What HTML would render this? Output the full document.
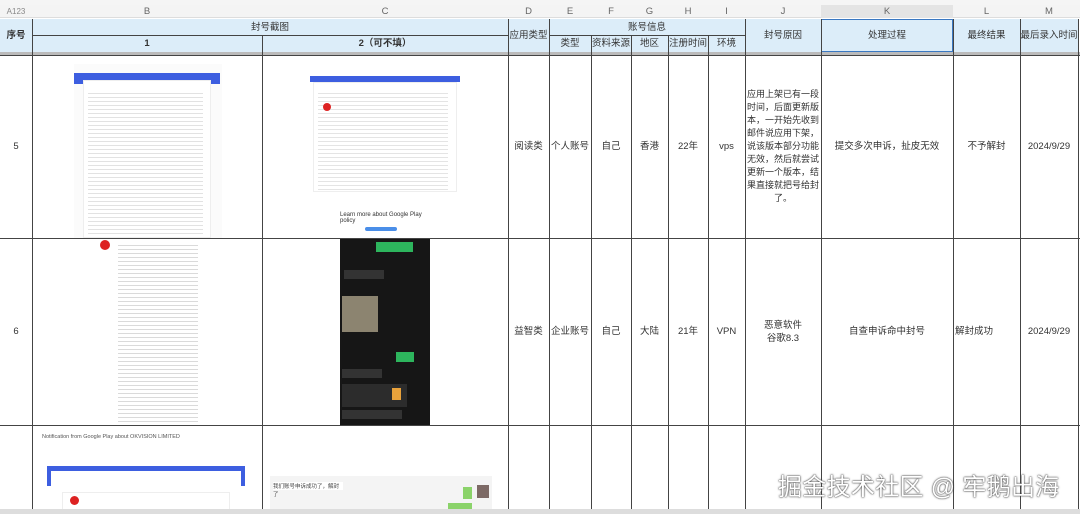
<!DOCTYPE html>
<html><head><meta charset="utf-8"><style>
*{margin:0;padding:0;box-sizing:border-box}
body{width:1080px;height:514px;overflow:hidden;background:#fff;font-family:"Liberation Sans","Noto Sans CJK SC",sans-serif;font-size:9.5px;color:#333;position:relative}
.a{position:absolute}
.c{position:absolute;display:flex;align-items:center;justify-content:center;text-align:center;line-height:13px}
.vl{position:absolute;width:1px;background:#444}
.hl{position:absolute;height:1px;background:#444}
</style></head><body>
<div class="a" style="left:0;top:0;width:1080px;height:5px;background:#f5f5f5"></div>
<div class="a" style="left:0;top:5px;width:1080px;height:13px;background:#f4f4f4;border-bottom:1px solid #ddd"></div>
<div class="a" style="left:821px;top:5px;width:132px;height:13px;background:#e4e4e4"></div>
<div class="c" style="left:0;top:5px;width:32px;height:13px;color:#888;font-size:8px">A123</div>
<div class="c" style="left:32px;top:5px;width:230px;height:13px;color:#666">B</div>
<div class="c" style="left:262px;top:5px;width:246px;height:13px;color:#666">C</div>
<div class="c" style="left:508px;top:5px;width:41px;height:13px;color:#666">D</div>
<div class="c" style="left:549px;top:5px;width:42px;height:13px;color:#666">E</div>
<div class="c" style="left:591px;top:5px;width:40px;height:13px;color:#666">F</div>
<div class="c" style="left:631px;top:5px;width:37px;height:13px;color:#666">G</div>
<div class="c" style="left:668px;top:5px;width:40px;height:13px;color:#666">H</div>
<div class="c" style="left:708px;top:5px;width:37px;height:13px;color:#666">I</div>
<div class="c" style="left:745px;top:5px;width:76px;height:13px;color:#666">J</div>
<div class="c" style="left:821px;top:5px;width:132px;height:13px;color:#666">K</div>
<div class="c" style="left:953px;top:5px;width:67px;height:13px;color:#666">L</div>
<div class="c" style="left:1020px;top:5px;width:58px;height:13px;color:#666">M</div>
<div class="a" style="left:0;top:19px;width:1078px;height:33px;background:#dcedf9"></div>
<div class="a" style="left:821px;top:19px;width:132px;height:33px;border:1.5px solid #3a78c2"></div>
<div class="a" style="left:0;top:52px;width:1080px;height:3px;background:#bbb"></div>
<div class="c" style="left:0;top:19px;width:32px;height:33px;font-weight:bold">序号</div>
<div class="c" style="left:32px;top:19px;width:476px;height:16px">封号截图</div>
<div class="c" style="left:32px;top:35px;width:230px;height:17px;font-weight:bold">1</div>
<div class="c" style="left:262px;top:35px;width:246px;height:17px;font-weight:bold">2（可不填）</div>
<div class="c" style="left:508px;top:19px;width:41px;height:33px">应用类型</div>
<div class="c" style="left:549px;top:19px;width:196px;height:16px">账号信息</div>
<div class="c" style="left:549px;top:35px;width:42px;height:17px">类型</div>
<div class="c" style="left:591px;top:35px;width:40px;height:17px">资料来源</div>
<div class="c" style="left:631px;top:35px;width:37px;height:17px">地区</div>
<div class="c" style="left:668px;top:35px;width:40px;height:17px">注册时间</div>
<div class="c" style="left:708px;top:35px;width:37px;height:17px">环境</div>
<div class="c" style="left:745px;top:19px;width:76px;height:33px">封号原因</div>
<div class="c" style="left:821px;top:19px;width:132px;height:33px">处理过程</div>
<div class="c" style="left:953px;top:19px;width:67px;height:33px">最终结果</div>
<div class="c" style="left:1020px;top:19px;width:58px;height:33px">最后录入时间</div>
<div class="hl" style="left:32px;top:35px;width:476px"></div>
<div class="hl" style="left:549px;top:35px;width:196px"></div>
<div class="vl" style="left:32px;top:19px;height:495px"></div>
<div class="vl" style="left:262px;top:35px;height:479px"></div>
<div class="vl" style="left:508px;top:19px;height:495px"></div>
<div class="vl" style="left:549px;top:19px;height:495px"></div>
<div class="vl" style="left:591px;top:35px;height:479px"></div>
<div class="vl" style="left:631px;top:35px;height:479px"></div>
<div class="vl" style="left:668px;top:35px;height:479px"></div>
<div class="vl" style="left:708px;top:35px;height:479px"></div>
<div class="vl" style="left:745px;top:19px;height:495px"></div>
<div class="vl" style="left:821px;top:19px;height:495px"></div>
<div class="vl" style="left:953px;top:19px;height:495px"></div>
<div class="vl" style="left:1020px;top:19px;height:495px"></div>
<div class="vl" style="left:1078px;top:19px;height:495px"></div>
<div class="hl" style="left:0;top:55px;width:1080px"></div>
<div class="hl" style="left:0;top:238px;width:1080px"></div>
<div class="hl" style="left:0;top:425px;width:1080px"></div>
<div class="a" style="left:74px;top:64px;width:148px;height:174px;background:#fbfbfb"></div>
<div class="a" style="left:74px;top:73px;width:146px;height:11px;background:#3d5ee0"></div>
<div class="a" style="left:83px;top:80px;width:128px;height:158px;background:#fff;border:1px solid #eee"></div>
<div class="a" style="left:88px;top:90px;width:115px;height:145px;background:repeating-linear-gradient(#fff 0 3px,#e2e2e2 3px 4px)"></div>
<div class="a" style="left:310px;top:76px;width:150px;height:6px;background:#3d5ee0"></div>
<div class="a" style="left:313px;top:82px;width:144px;height:110px;background:#fff;border:1px solid #eee"></div>
<div class="a" style="left:318px;top:90px;width:130px;height:100px;background:repeating-linear-gradient(#fff 0 3px,#e4e4e4 3px 4px)"></div>
<div class="a" style="left:323px;top:103px;width:8px;height:8px;border-radius:50%;background:#d22"></div>
<div class="a" style="left:340px;top:212px;width:90px;height:10px;color:#333;font-size:6px">Learn more about Google Play policy</div>
<div class="a" style="left:365px;top:227px;width:32px;height:4px;background:#4a8ee8;border-radius:2px"></div>
<div class="a" style="left:100px;top:240px;width:10px;height:10px;border-radius:50%;background:#d22"></div>
<div class="a" style="left:118px;top:242px;width:80px;height:180px;background:repeating-linear-gradient(#fff 0 3px,#dadada 3px 4px)"></div>
<div class="a" style="left:340px;top:239px;width:90px;height:186px;background:#161616"></div>
<div class="a" style="left:376px;top:242px;width:37px;height:10px;background:#2db55d"></div>
<div class="a" style="left:344px;top:270px;width:40px;height:9px;background:#333"></div>
<div class="a" style="left:342px;top:296px;width:36px;height:36px;background:#8c8470"></div>
<div class="a" style="left:396px;top:352px;width:18px;height:10px;background:#2db55d"></div>
<div class="a" style="left:342px;top:369px;width:40px;height:9px;background:#333"></div>
<div class="a" style="left:342px;top:384px;width:65px;height:23px;background:#2c2c2c"></div>
<div class="a" style="left:392px;top:388px;width:9px;height:12px;background:#e9a23b"></div>
<div class="a" style="left:342px;top:410px;width:60px;height:9px;background:#333"></div>
<div class="a" style="left:42px;top:434px;width:140px;height:8px;font-size:5.5px;color:#555">Notification from Google Play about OKVISION LIMITED</div>
<div class="a" style="left:47px;top:466px;width:198px;height:5px;background:#3d5ee0"></div>
<div class="a" style="left:47px;top:466px;width:4px;height:20px;background:#3d5ee0"></div>
<div class="a" style="left:241px;top:466px;width:4px;height:20px;background:#3d5ee0"></div>
<div class="a" style="left:62px;top:492px;width:168px;height:18px;border:1px solid #eee"></div>
<div class="a" style="left:70px;top:496px;width:9px;height:9px;border-radius:50%;background:#d22"></div>
<div class="a" style="left:270px;top:476px;width:222px;height:36px;background:#f4f4f4"></div>
<div class="a" style="left:273px;top:482px;width:70px;height:8px;font-size:5.5px;color:#444;background:#fff">我们账号申诉成功了，解封了</div>
<div class="a" style="left:463px;top:487px;width:9px;height:12px;background:#8bd36a"></div>
<div class="a" style="left:477px;top:485px;width:12px;height:13px;background:#7d6a66"></div>
<div class="a" style="left:448px;top:503px;width:24px;height:8px;background:#8bd36a"></div>
<div class="c" style="left:0;top:55px;width:32px;height:183px">5</div>
<div class="c" style="left:508px;top:55px;width:41px;height:183px">阅读类</div>
<div class="c" style="left:549px;top:55px;width:42px;height:183px">个人账号</div>
<div class="c" style="left:591px;top:55px;width:40px;height:183px">自己</div>
<div class="c" style="left:631px;top:55px;width:37px;height:183px">香港</div>
<div class="c" style="left:668px;top:55px;width:40px;height:183px">22年</div>
<div class="c" style="left:708px;top:55px;width:37px;height:183px">vps</div>
<div class="c" style="left:745px;top:55px;width:76px;height:183px;font-size:9px;line-height:13px;white-space:nowrap">应用上架已有一段<br>时间，后面更新版<br>本，一开始先收到<br>邮件说应用下架，<br>说该版本部分功能<br>无效，然后就尝试<br>更新一个版本，结<br>果直接就把号给封<br>了。</div>
<div class="c" style="left:821px;top:55px;width:132px;height:183px">提交多次申诉，扯皮无效</div>
<div class="c" style="left:953px;top:55px;width:67px;height:183px">不予解封</div>
<div class="c" style="left:1020px;top:55px;width:58px;height:183px">2024/9/29</div>
<div class="c" style="left:0;top:238px;width:32px;height:187px">6</div>
<div class="c" style="left:508px;top:238px;width:41px;height:187px">益智类</div>
<div class="c" style="left:549px;top:238px;width:42px;height:187px">企业账号</div>
<div class="c" style="left:591px;top:238px;width:40px;height:187px">自己</div>
<div class="c" style="left:631px;top:238px;width:37px;height:187px">大陆</div>
<div class="c" style="left:668px;top:238px;width:40px;height:187px">21年</div>
<div class="c" style="left:708px;top:238px;width:37px;height:187px">VPN</div>
<div class="c" style="left:745px;top:238px;width:76px;height:187px">恶意软件<br>谷歌8.3</div>
<div class="c" style="left:821px;top:238px;width:132px;height:187px">自查申诉命中封号</div>
<div class="c" style="left:953px;top:238px;width:67px;height:187px;justify-content:flex-start;padding-left:2px">解封成功</div>
<div class="c" style="left:1020px;top:238px;width:58px;height:187px">2024/9/29</div>
<div class="a" style="left:0;top:509px;width:1080px;height:5px;background:#ddd"></div>
<div class="a" style="left:778px;top:467px;font-size:24px;color:#fff;text-shadow:0 0 2px #444,0 0 1px #222;letter-spacing:0.3px;white-space:nowrap">掘金技术社区 @ 牢鹅出海</div>
</body></html>
